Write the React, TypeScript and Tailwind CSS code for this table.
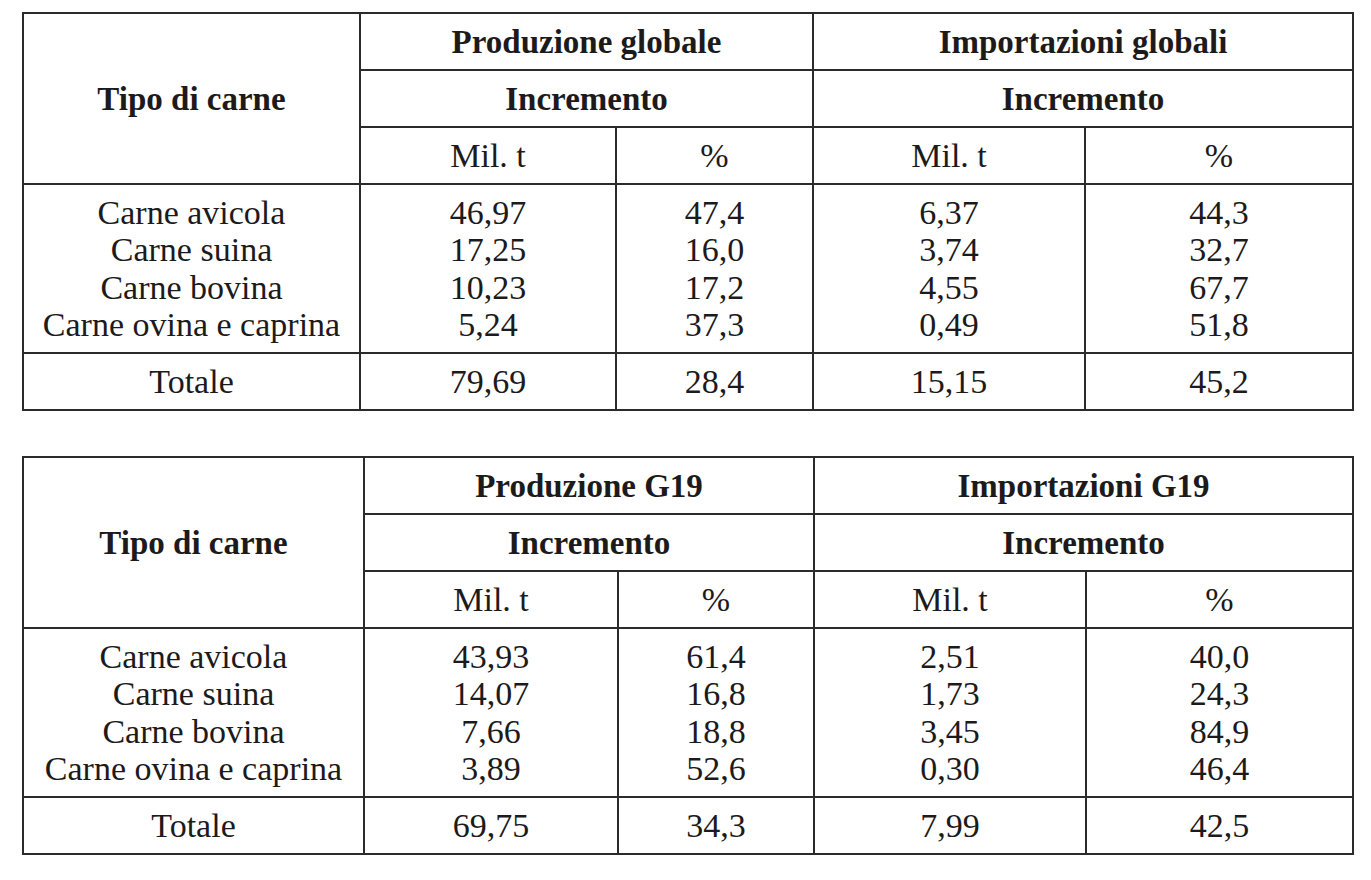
const tables = [
  {
    prod: "Produzione globale",
    imp: "Importazioni globali",
    cols: [337, 256, 197, 272, 268],
    rows: [
      ["Carne avicola", "46,97", "47,4", "6,37", "44,3"],
      ["Carne suina", "17,25", "16,0", "3,74", "32,7"],
      ["Carne bovina", "10,23", "17,2", "4,55", "67,7"],
      ["Carne ovina e caprina", "5,24", "37,3", "0,49", "51,8"],
    ],
    total: ["Totale", "79,69", "28,4", "15,15", "45,2"],
  },
  {
    prod: "Produzione G19",
    imp: "Importazioni G19",
    cols: [341, 254, 196, 272, 267],
    rows: [
      ["Carne avicola", "43,93", "61,4", "2,51", "40,0"],
      ["Carne suina", "14,07", "16,8", "1,73", "24,3"],
      ["Carne bovina", "7,66", "18,8", "3,45", "84,9"],
      ["Carne ovina e caprina", "3,89", "52,6", "0,30", "46,4"],
    ],
    total: ["Totale", "69,75", "34,3", "7,99", "42,5"],
  },
];

const cell = "border-2 border-[#2b2b2b] text-center align-middle p-0";

function DataTable({ t }: { t: (typeof tables)[number] }) {
  return (
    <table className="table-fixed border-collapse w-[1330px] text-[#1c1a1b]">
      <colgroup>
        {t.cols.map((w, i) => (
          <col key={i} style={{ width: w }} />
        ))}
      </colgroup>
      <thead className="font-bold text-[33px] leading-[40px]">
        <tr className="h-[57px]">
          <th rowSpan={3} className={cell}>
            Tipo di carne
          </th>
          <th colSpan={2} className={cell}>
            {t.prod}
          </th>
          <th colSpan={2} className={cell}>
            {t.imp}
          </th>
        </tr>
        <tr className="h-[57px]">
          <th colSpan={2} className={cell}>
            Incremento
          </th>
          <th colSpan={2} className={cell}>
            Incremento
          </th>
        </tr>
        <tr className="h-[57px] text-[34px]">
          <th className={`${cell} font-normal`}>Mil. t</th>
          <th className={`${cell} font-normal`}>%</th>
          <th className={`${cell} font-normal`}>Mil. t</th>
          <th className={`${cell} font-normal`}>%</th>
        </tr>
      </thead>
      <tbody className="text-[34px] leading-[37.5px]">
        <tr className="h-[169px]">
          {[0, 1, 2, 3, 4].map((c) => (
            <td key={c} className={cell}>
              {t.rows.map((r, i) => (
                <div key={i}>{r[c]}</div>
              ))}
            </td>
          ))}
        </tr>
        <tr className="h-[57px]">
          {t.total.map((v, i) => (
            <td key={i} className={cell}>
              {v}
            </td>
          ))}
        </tr>
      </tbody>
    </table>
  );
}

export default function App() {
  return (
    <div
      className="min-h-screen w-[1371px] bg-white pl-[22px] pt-[12px] flex flex-col gap-[45px]"
      style={{ fontFamily: '"Liberation Serif", "DejaVu Serif", serif' }}
    >
      {tables.map((t, i) => (
        <DataTable key={i} t={t} />
      ))}
    </div>
  );
}
